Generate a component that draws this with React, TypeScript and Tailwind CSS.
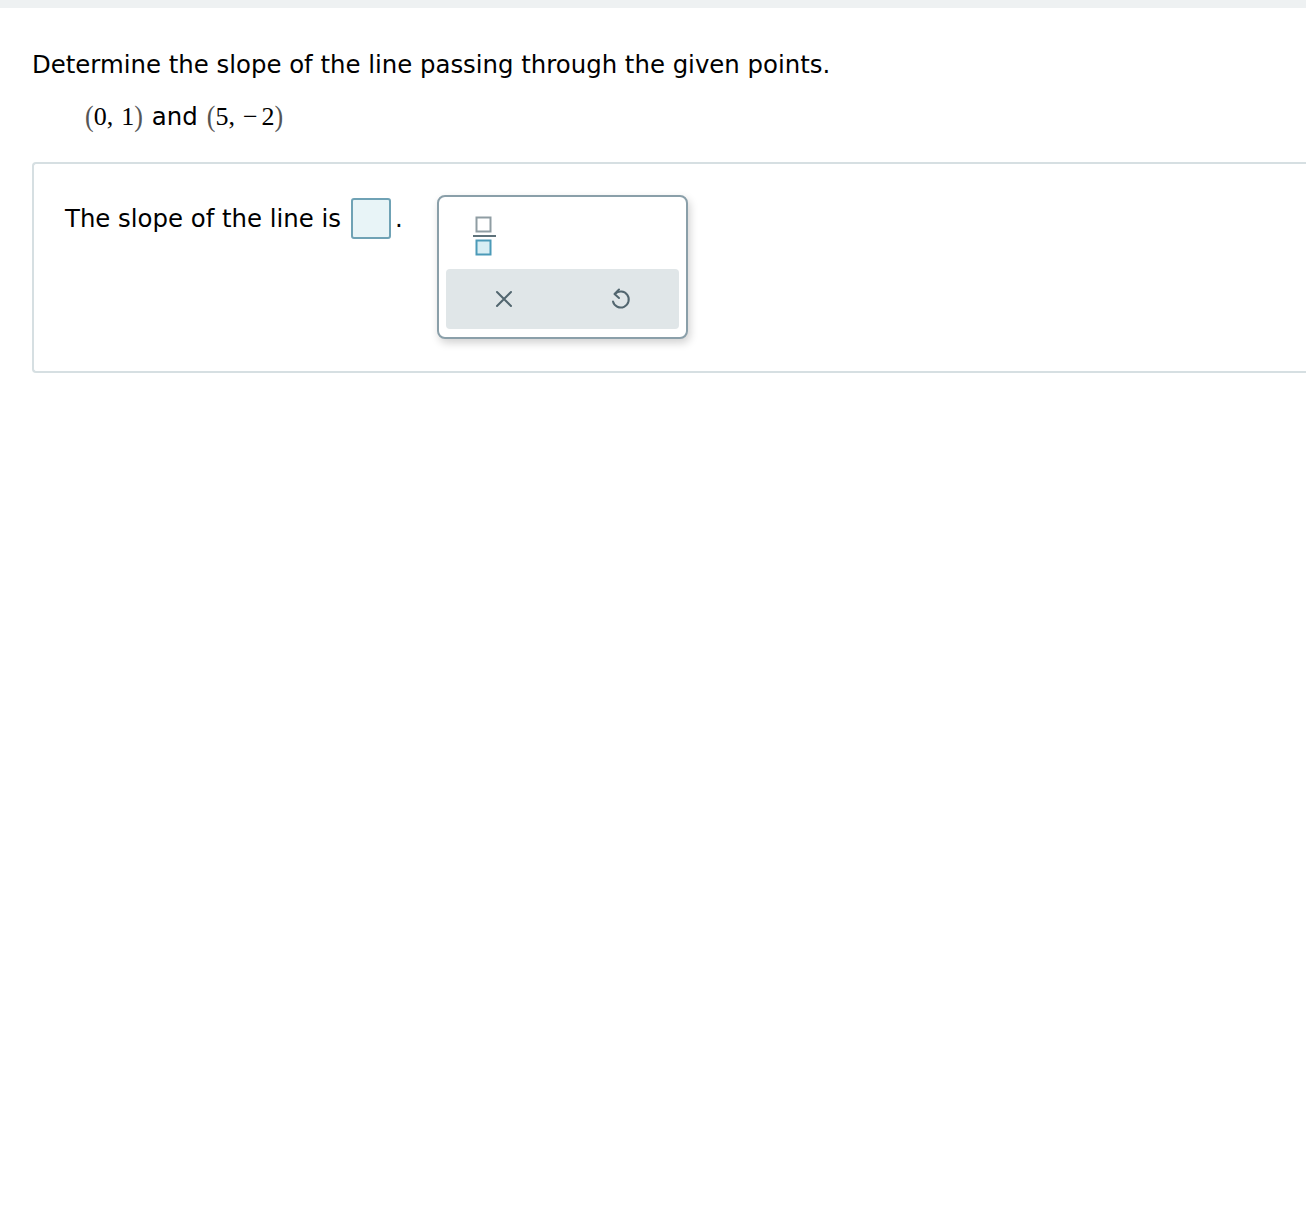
export default function App() {
  return (
    <div className="min-h-[1230px] bg-white font-['DejaVu_Sans',Verdana,sans-serif] text-black">
      <div className="h-2 bg-[#eef1f2]" />
      <div className="pl-8 pt-[43px]">
        <p className="text-[24.4px] leading-7">
          Determine the slope of the line passing through the given points.
        </p>
        <div className="mt-[24px] ml-[53px] flex items-baseline text-[24.4px] leading-7">
          <Point a="0" b="1" />
          <span className="mx-[9px]">and</span>
          <Point a="5" b="−" c="2" />
        </div>
        <div className="mt-[31px] h-[211px] rounded-l-[4px] border-y-2 border-l-2 border-[#d6dfe2] pl-[31px] pt-[33px]">
          <div className="flex items-start">
            <div className="flex items-center pt-[1px]">
              <span className="text-[24.4px] leading-7">The slope of the line is</span>
              <span className="ml-[10px] inline-block h-[41px] w-[40px] rounded-[3px] border-2 border-[#6fa2b5] bg-[#e8f4f7]" />
              <span className="ml-[4px] text-[24.4px] leading-7">.</span>
            </div>
            <Keypad />
          </div>
        </div>
      </div>
    </div>
  )
}

function Point({ a, b, c }: { a: string; b: string; c?: string }) {
  return (
    <span className="font-['Liberation_Serif','Times_New_Roman',serif] text-[26px]">
      <span className="inline-block scale-y-[1.15] text-[#555]">(</span>
      {a},<span className="ml-[8px]">{b}</span>
      {c && <span className="ml-[4px]">{c}</span>}
      <span className="inline-block scale-y-[1.15] text-[#555]">)</span>
    </span>
  )
}

function Keypad() {
  return (
    <div className="-mt-[2px] ml-[34px] h-[144px] w-[251px] rounded-[8px] border-2 border-[#8a9fa9] bg-white p-[7px] shadow-[2px_4px_8px_rgba(0,0,0,0.18)]">
      <div className="h-[65px] pl-[26px] pt-[12px]">
        <svg width="26" height="40" viewBox="0 0 26 40">
          <rect x="4.5" y="1.5" width="14" height="14" fill="white" stroke="#8f9da3" strokeWidth="2" />
          <rect x="1" y="19" width="23" height="2" fill="#5e727b" />
          <rect x="4.5" y="24.5" width="14" height="14" fill="#d8eef4" stroke="#4b9ab8" strokeWidth="2" />
        </svg>
      </div>
      <div className="flex h-[60px] items-center rounded-[4px] bg-[#e0e6e8]">
        <div className="flex w-[116px] justify-center">
          <svg width="18" height="18" viewBox="0 0 18 18" fill="none" stroke="#52666f" strokeWidth="2" strokeLinecap="round">
            <path d="M2 2 L16 16 M16 2 L2 16" />
          </svg>
        </div>
        <div className="flex w-[116px] justify-center">
          <svg width="22" height="24" viewBox="0 0 22 24" fill="none" stroke="#52666f" strokeWidth="2" strokeLinecap="round" strokeLinejoin="round">
            <path d="M6 7 A8 8 0 1 1 4 14.5" />
            <path d="M10 2.5 L5.5 7 L10 11" />
          </svg>
        </div>
      </div>
    </div>
  )
}
